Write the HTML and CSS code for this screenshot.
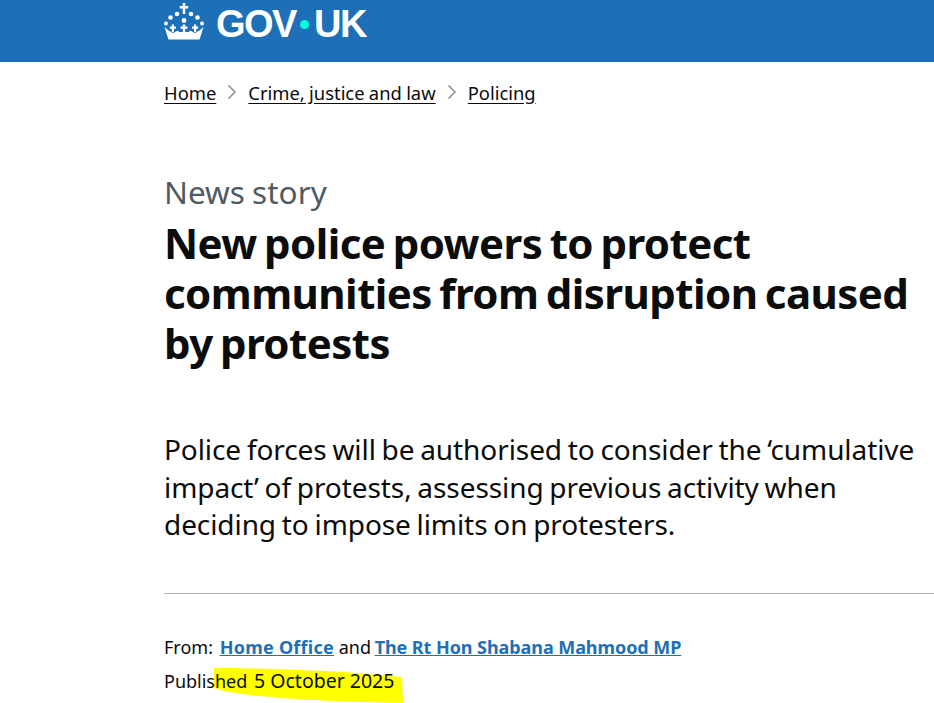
FILE: index.html
```html
<!DOCTYPE html>
<html lang="en">
<head>
    <meta charset="UTF-8">
    <title>New police powers to protect communities from disruption caused by protests</title>
    <link rel="stylesheet" href="styles.css">
</head>
<body>
    <header class="site-header">
        <a class="logo" href="#">
            <svg class="crown" viewBox="0 0 40 38" width="40" height="38" aria-hidden="true">
                <g fill="#fff">
                    <path d="M18.700 1h2.600v3h3v2.600h-3V12h-2.600V6.600h-3V4h3z"/>
                    <circle cx="20" cy="18.500" r="2.400"/>
                    <circle cx="13" cy="12" r="2.300"/>
                    <circle cx="27" cy="12" r="2.300"/>
                    <circle cx="6.500" cy="15.500" r="2.300"/>
                    <circle cx="33.500" cy="15.500" r="2.300"/>
                    <circle cx="2" cy="21.500" r="2"/>
                    <circle cx="38" cy="21.500" r="2"/>
                    <path d="M18.800 22.500h2.400v2h2.300v2.300h-2.300V30h-2.400v-3.200h-2.300v-2.300h2.300z"/>
                    <path d="M7.800 22.500h2.200v2h2v2.300h-2V30H7.800v-3.200h-2v-2.300h2z"/>
                    <path d="M30 22.500h2.200v2h2v2.300h-2V30H30v-3.200h-2v-2.300h2z"/>
                    <path d="M.5 25l4 3.500L9 31l5-2.500 1 1.500h10l1-1.500 5 2.500 4.500-2.500 4-3.500-4 12.500H4.500z"/>
                </g>
            </svg>
            <span class="logo-text">GOV<span class="logo-dot"></span>UK</span>
        </a>
    </header>

    <main class="page">
        <nav class="breadcrumbs">
            <a href="#">Home</a>
            <svg class="chevron" viewBox="0 0 10 16" width="10" height="16" aria-hidden="true"><path d="M1.500 1.500L8 8l-6.500 6.500" fill="none" stroke="#8a8f93" stroke-width="1.500"/></svg>
            <a href="#">Crime, justice and law</a>
            <svg class="chevron" viewBox="0 0 10 16" width="10" height="16" aria-hidden="true"><path d="M1.500 1.500L8 8l-6.500 6.500" fill="none" stroke="#8a8f93" stroke-width="1.500"/></svg>
            <a href="#">Policing</a>
        </nav>

        <p class="kicker">News story</p>
        <h1>New police powers to protect communities from disruption caused by protests</h1>

        <p class="lead">Police forces will be authorised to consider the ‘cumulative impact’ of protests, assessing previous activity when deciding to impose limits on protesters.</p>

        <hr class="rule">

        <div class="meta">
            <p class="meta-line">From: <a class="org org-office" href="#">Home Office</a> and <a class="org org-minister" href="#">The Rt Hon Shabana Mahmood MP</a></p>
            <p class="meta-line published">
                <svg class="highlight" viewBox="0 0 190 37" width="190" height="37" aria-hidden="true"><path d="M0 1C30 1 60 2 86 3C120 4 160 7 188 10L189 36C160 35 130 35 103 33C80 32 55 30 36 28C20 26 8 24 0 21z" fill="#ffff00"/></svg>
                <span class="published-text">Published <span class="date">5 October 2025</span></span>
            </p>
        </div>
    </main>
</body>
</html>
```

FILE: styles.css
```css
* {
    margin: 0;
    padding: 0;
    box-sizing: border-box;
}

html, body {
    height: 703px;
    overflow: hidden;
}

body {
    font-family: 'Noto Sans', Arial, sans-serif;
    color: #0b0c0c;
    background: #fff;
}

a {
    color: inherit;
}

.site-header {
    height: 62px;
    padding-left: 164px;
    background: #1d70b8;
}

.logo {
    display: flex;
    align-items: flex-start;
    gap: 12px;
    color: #fff;
    text-decoration: none;
}

.crown {
    flex: none;
    margin-top: 2px;
}

.logo-text {
    display: flex;
    align-items: center;
    font-family: 'Liberation Sans', Arial, sans-serif;
    font-size: 38px;
    font-weight: 700;
    line-height: 48px;
    letter-spacing: -1.500px;
}

.logo-dot {
    width: 9px;
    height: 9px;
    margin: 0 5px 0 4px;
    border-radius: 50%;
    background: #00ffe0;
}

.page {
    padding-left: 164px;
}

.breadcrumbs {
    display: flex;
    align-items: center;
    gap: 11px;
    height: 32px;
    margin-top: 14px;
    font-size: 18.400px;
    word-spacing: -0.500px;
}

.breadcrumbs a {
    text-underline-offset: 3px;
}

.kicker {
    margin-top: 66px;
    font-size: 31.500px;
    line-height: 36px;
    color: #505a5f;
    word-spacing: -1px;
}

h1 {
    margin-top: 8px;
    font-size: 42px;
    font-weight: 700;
    line-height: 50px;
    letter-spacing: -0.550px;
    word-spacing: -3px;
}

.lead {
    margin-top: 63px;
    max-width: 770px;
    font-size: 28px;
    line-height: 37.500px;
    letter-spacing: -0.080px;
    word-spacing: -1.400px;
}

.rule {
    margin-top: 49px;
    border: 0;
    border-top: 1px solid #b1b4b6;
}

.meta {
    margin-top: 36px;
    font-size: 18px;
}

.meta-line {
    line-height: 34px;
}

.org {
    color: #1d70b8;
    font-weight: 700;
}

.org-office {
    margin-left: 2px;
    letter-spacing: 0.250px;
}

.org-minister {
    margin-left: -1px;
    letter-spacing: -0.070px;
}

.published {
    position: relative;
}

.highlight {
    position: absolute;
    left: 50px;
    top: 3px;
}

.published-text {
    position: relative;
}

.date {
    margin-left: 2px;
    font-size: 19.500px;
}
```
